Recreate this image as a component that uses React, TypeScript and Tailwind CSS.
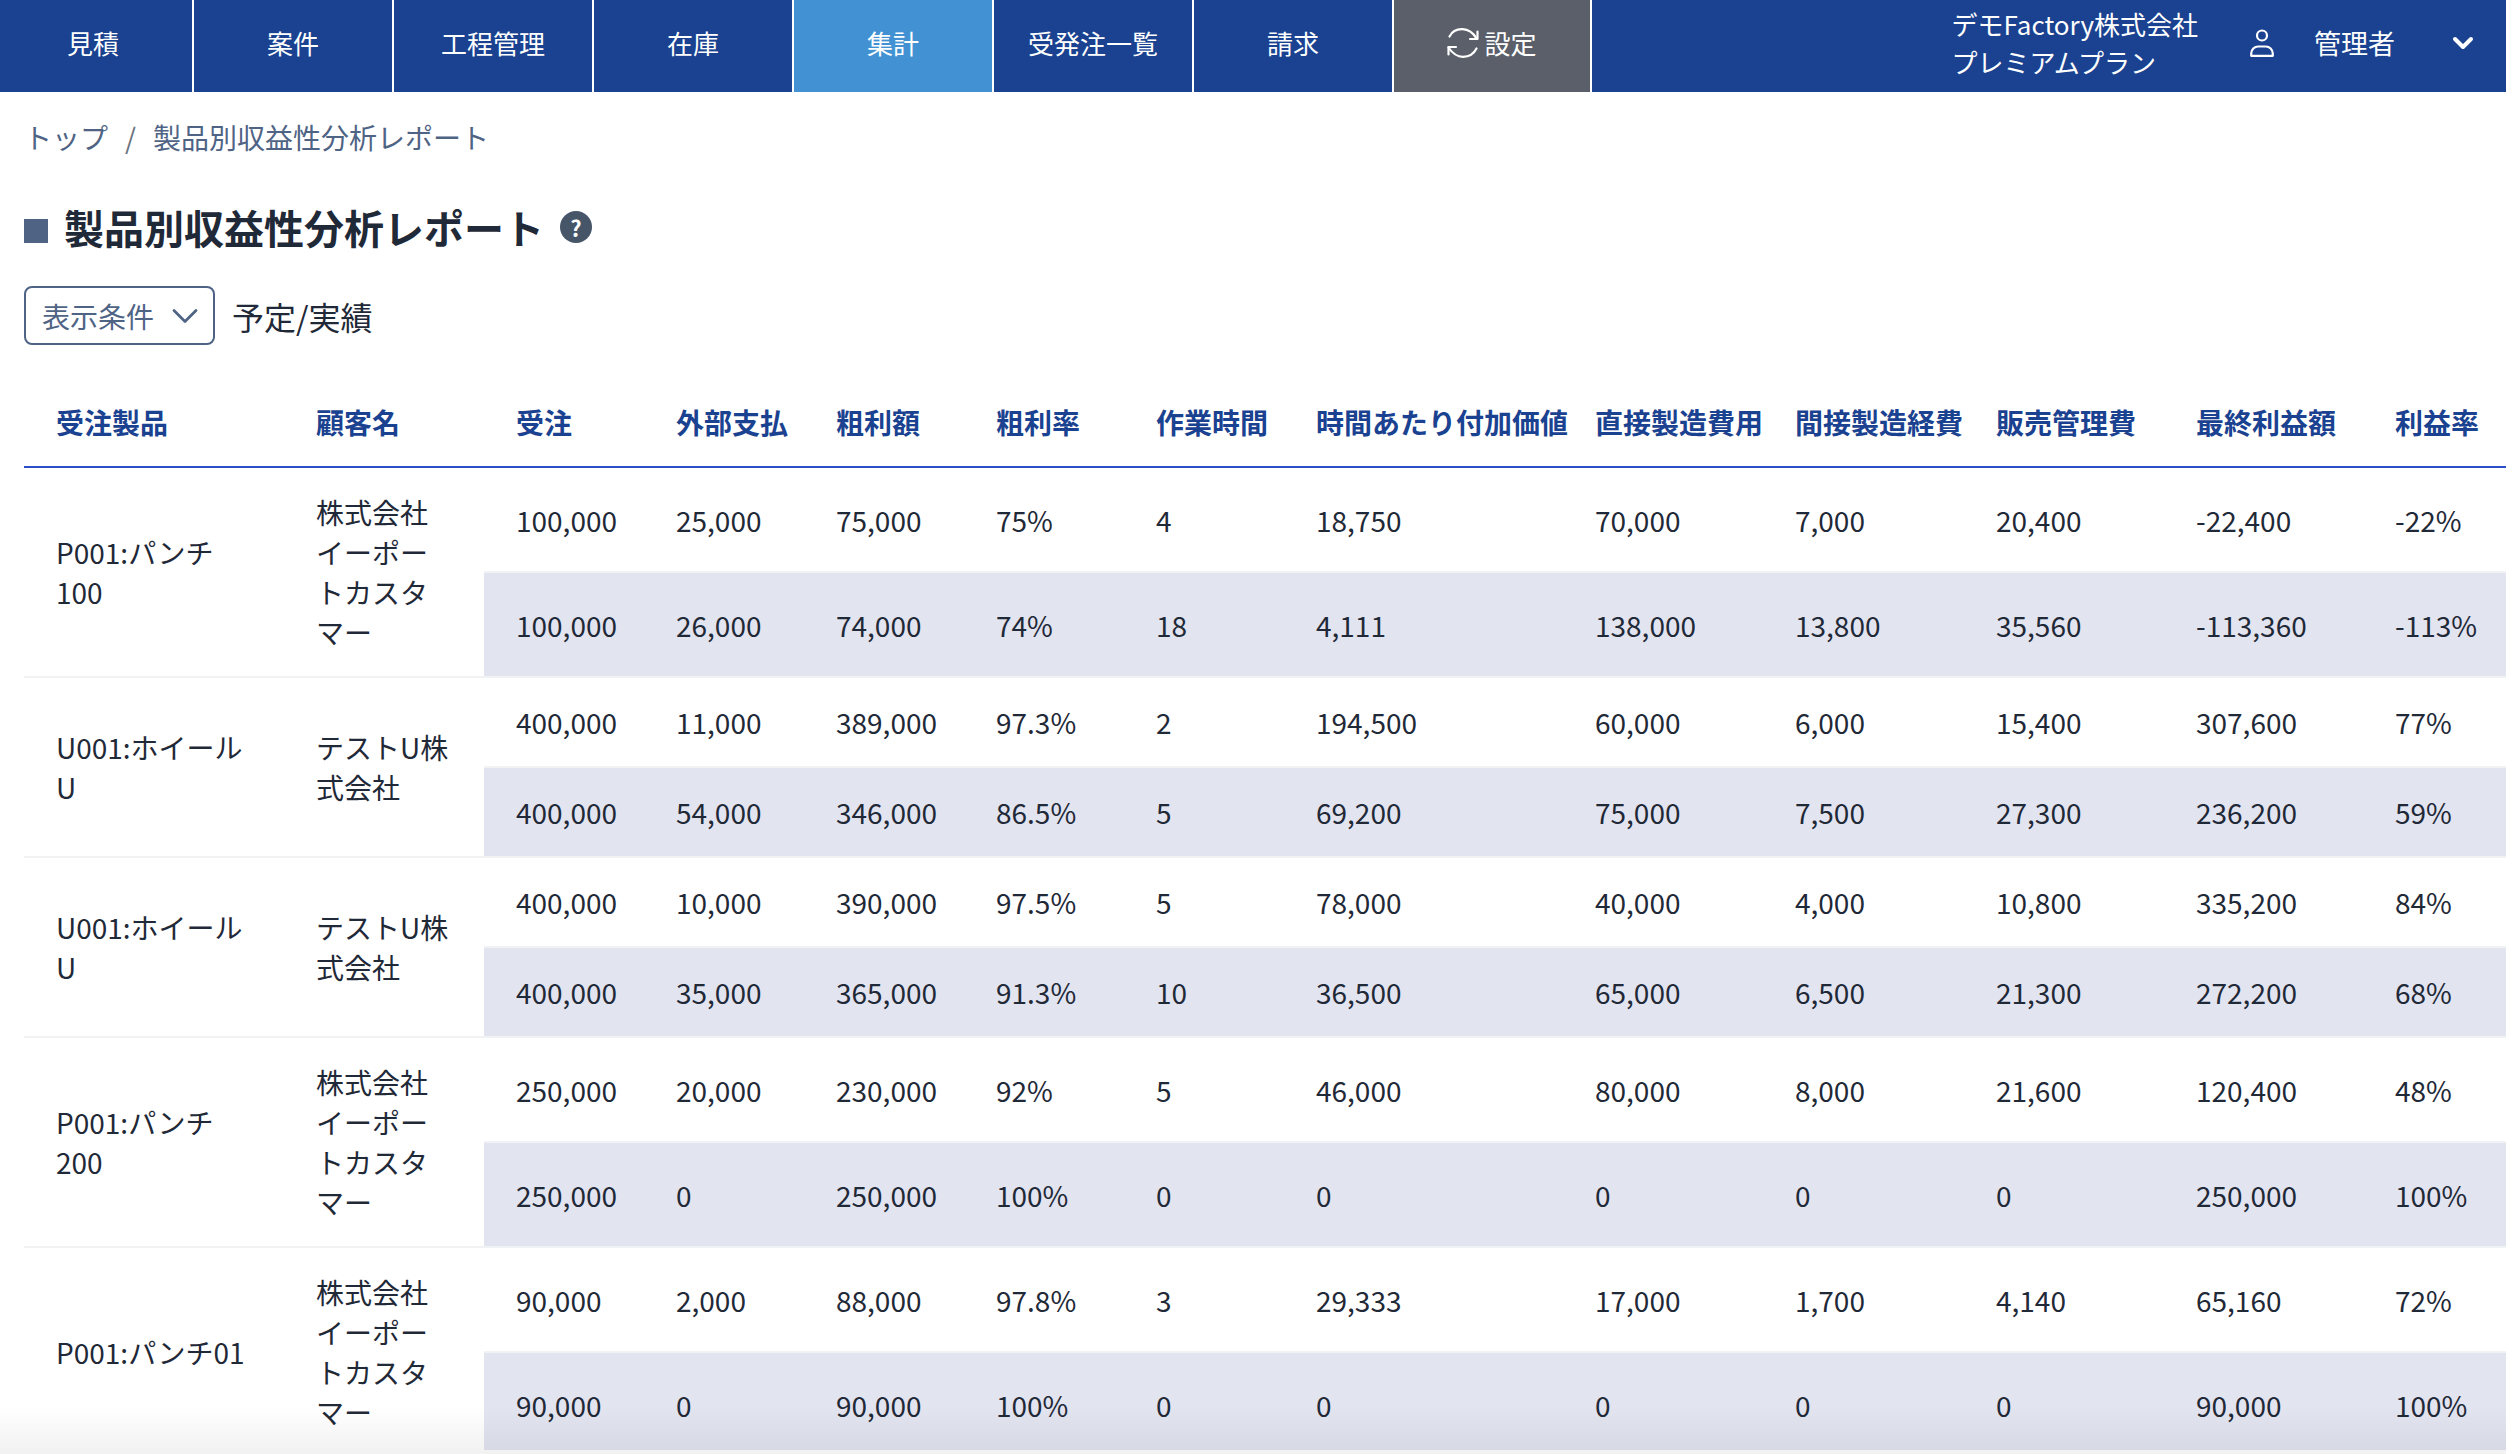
import { ChevronDown } from "lucide-react"

const navItems = ["見積", "案件", "工程管理", "在庫", "集計", "受発注一覧", "請求"]

const columns = [
  { label: "受注製品", width: "w-[260px]" },
  { label: "顧客名", width: "w-[200px]" },
  { label: "受注", width: "w-[160px]" },
  { label: "外部支払", width: "w-[160px]" },
  { label: "粗利額", width: "w-[160px]" },
  { label: "粗利率", width: "w-[160px]" },
  { label: "作業時間", width: "w-[160px]" },
  { label: "時間あたり付加価値", width: "w-[279px]" },
  { label: "直接製造費用", width: "w-[200px]" },
  { label: "間接製造経費", width: "w-[201px]" },
  { label: "販売管理費", width: "w-[200px]" },
  { label: "最終利益額", width: "w-[199px]" },
  { label: "利益率", width: "w-[143px]" },
]

const customerA = "株式会社イーポートカスタマー"
const customerB = "テストU株式会社"

const groups = [
  {
    product: "P001:パンチ100",
    customer: customerA,
    plan: ["100,000", "25,000", "75,000", "75%", "4", "18,750", "70,000", "7,000", "20,400", "-22,400", "-22%"],
    actual: ["100,000", "26,000", "74,000", "74%", "18", "4,111", "138,000", "13,800", "35,560", "-113,360", "-113%"],
  },
  {
    product: "U001:ホイールU",
    customer: customerB,
    plan: ["400,000", "11,000", "389,000", "97.3%", "2", "194,500", "60,000", "6,000", "15,400", "307,600", "77%"],
    actual: ["400,000", "54,000", "346,000", "86.5%", "5", "69,200", "75,000", "7,500", "27,300", "236,200", "59%"],
  },
  {
    product: "U001:ホイールU",
    customer: customerB,
    plan: ["400,000", "10,000", "390,000", "97.5%", "5", "78,000", "40,000", "4,000", "10,800", "335,200", "84%"],
    actual: ["400,000", "35,000", "365,000", "91.3%", "10", "36,500", "65,000", "6,500", "21,300", "272,200", "68%"],
  },
  {
    product: "P001:パンチ200",
    customer: customerA,
    plan: ["250,000", "20,000", "230,000", "92%", "5", "46,000", "80,000", "8,000", "21,600", "120,400", "48%"],
    actual: ["250,000", "0", "250,000", "100%", "0", "0", "0", "0", "0", "250,000", "100%"],
  },
  {
    product: "P001:パンチ01",
    customer: customerA,
    plan: ["90,000", "2,000", "88,000", "97.8%", "3", "29,333", "17,000", "1,700", "4,140", "65,160", "72%"],
    actual: ["90,000", "0", "90,000", "100%", "0", "0", "0", "0", "0", "90,000", "100%"],
  },
]

function SyncIcon() {
  return (
    <svg viewBox="0 0 32 30" className="h-[30px] w-[32px]" fill="none" stroke="currentColor" strokeWidth="2.2" strokeLinecap="round" strokeLinejoin="round">
      <path d="M2.5 8.5C5 3.5 10 1 15.5 1.2c5.5.2 10.500 3.300 14 9.300" />
      <path d="M30.500 3.500v7.500h-7.500" />
      <path d="M29.500 20.500c-2.500 5-7.500 8.300-13.500 8.300-5.500 0-10.500-3.300-14.500-9.300" />
      <path d="M1.500 26.500v-7.500h7.500" />
    </svg>
  )
}

function UserIcon() {
  return (
    <svg viewBox="0 0 24 28" className="h-[28px] w-[24px]" fill="none" stroke="currentColor" strokeWidth="2.2" strokeLinejoin="round">
      <circle cx="12" cy="6.500" r="5" />
      <path d="M1.200 26.800v-2.300c0-4.200 3.300-7 7-7h7.600c3.700 0 7 2.800 7 7v2.300z" />
    </svg>
  )
}

function Header() {
  return (
    <header className="flex h-[92px] items-stretch bg-[#1a4290] text-[26px] text-white">
      <nav className="-ml-[6px] flex">
        {navItems.map((item) => (
          <a
            key={item}
            className={`flex w-[200px] items-center justify-center border-r-2 border-white pb-[6px] ${item === "集計" ? "bg-[#4292d3]" : ""}`}
          >
            {item}
          </a>
        ))}
        <a className="flex w-[198px] items-center justify-center gap-[5px] border-r-2 border-white bg-[#5a5f6a] pb-[6px]">
          <SyncIcon />
          設定
        </a>
      </nav>
      <div className="ml-auto flex items-center pb-[6px]">
        <div className="leading-[38px]">
          <div>デモFactory株式会社</div>
          <div>プレミアムプラン</div>
        </div>
        <div className="ml-[52px]">
          <UserIcon />
        </div>
        <span className="ml-[40px] text-[27px]">管理者</span>
        <ChevronDown className="ml-[52px] mr-[27px] h-[32px] w-[32px]" strokeWidth={3} />
      </div>
    </header>
  )
}

function ReportRow({ values, shaded }: { values: string[]; shaded?: boolean }) {
  return (
    <>
      {values.map((value, i) => (
        <td key={i} className={`border-b-2 border-[#f1f2f4] py-[24px] pl-[32px] whitespace-nowrap ${shaded ? "bg-[#e2e4f0]" : ""}`}>
          {value}
        </td>
      ))}
    </>
  )
}

function GroupRows({ group }: { group: (typeof groups)[number] }) {
  return (
    <>
      <tr>
        <td rowSpan={2} className="border-b-2 border-[#f1f2f4] px-[32px] py-[24px] align-middle">
          {group.product}
        </td>
        <td rowSpan={2} className="border-b-2 border-[#f1f2f4] px-[32px] py-[24px] align-middle">
          {group.customer}
        </td>
        <ReportRow values={group.plan} />
      </tr>
      <tr>
        <ReportRow values={group.actual} shaded />
      </tr>
    </>
  )
}

export default function App() {
  return (
    <div className="h-screen w-full overflow-hidden bg-white">
      <div
        className="relative h-full w-[2506px] overflow-hidden text-[28px] leading-[40px] text-[#1f2937]"
        style={{ fontFamily: '"Noto Sans CJK JP", "Noto Sans", sans-serif' }}
      >
        <Header />
        <main className="pl-[24px]">
          <div className="mt-[25px] flex h-[40px] items-center text-[#4f6485]">
            <a>トップ</a>
            <span className="mx-[17px] text-[#6b7280]">/</span>
            <span>製品別収益性分析レポート</span>
          </div>

          <div className="mt-[40px] flex h-[60px] items-center">
            <span className="mt-[7px] h-[24px] w-[24px] bg-[#4f6485]" />
            <h1 className="ml-[16px] text-[40px] font-bold">製品別収益性分析レポート</h1>
            <span className="ml-[16px] flex h-[32px] w-[32px] items-center justify-center rounded-full bg-[#475569] text-[22px] leading-none font-bold text-white">
              ?
            </span>
          </div>

          <div className="mt-[29px] flex h-[59px] items-center">
            <button className="flex h-[59px] w-[191px] items-center rounded-lg border-2 border-[#4f6485] pl-[16px] text-[#4f6485]">
              表示条件
              <ChevronDown className="ml-[9px] h-[44px] w-[44px]" strokeWidth={1.5} />
            </button>
            <span className="ml-[17px] text-[32px]">予定/実績</span>
          </div>

          <table className="mt-[32px] w-[2482px] table-fixed border-collapse">
            <colgroup>
              {columns.map((col) => (
                <col key={col.label} className={col.width} />
              ))}
            </colgroup>
            <thead>
              <tr className="h-[90px] border-b-2 border-[#2b4fc7]">
                {columns.map((col) => (
                  <th key={col.label} className="pl-[32px] text-left font-bold whitespace-nowrap text-[#1a4290]">
                    {col.label}
                  </th>
                ))}
              </tr>
            </thead>
            <tbody>
              {groups.map((group, i) => (
                <GroupRows key={i} group={group} />
              ))}
            </tbody>
          </table>
        </main>
        {/* bottom fade over the last row */}
        <div className="pointer-events-none absolute inset-x-0 bottom-0 flex h-[48px] flex-col">
          <div className="flex-1 bg-gradient-to-b from-transparent to-black/5" />
          <div className="h-[4px] bg-[#f2f2f2]" />
        </div>
      </div>
    </div>
  )
}
